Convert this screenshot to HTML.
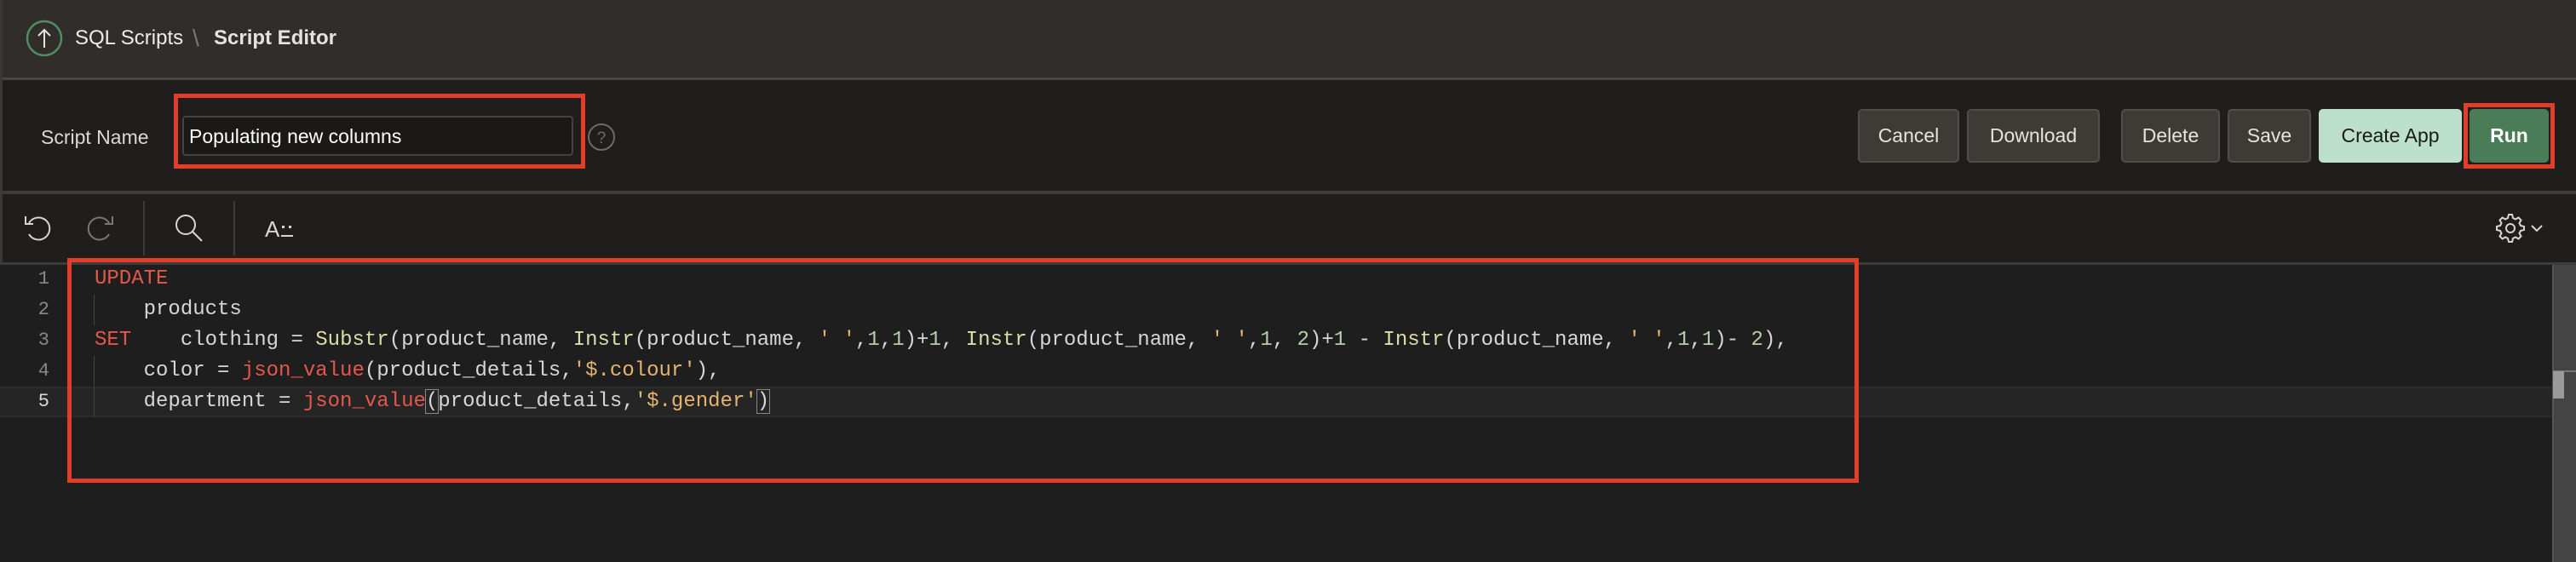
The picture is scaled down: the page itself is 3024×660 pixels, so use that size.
<!DOCTYPE html>
<html><head><meta charset="utf-8"><style>
*{margin:0;padding:0;box-sizing:border-box}
body{width:3024px;height:660px;background:#1f1e1d;position:relative;overflow:hidden;font-family:"Liberation Sans",sans-serif;color:#e6e2dc}
.a{position:absolute}
.hdr{left:0;top:0;width:3024px;height:94px;background:#312d2a;border-bottom:3px solid #4a4640}
.btn{position:absolute;top:128px;height:63px;background:#3e3a36;border:2px solid #524d48;border-radius:5px;color:#e6e2dc;font-size:23px;display:flex;align-items:center;justify-content:center}
.red{position:absolute;border:5px solid #e23d28}
.code{font-family:"Liberation Mono",monospace;font-size:24px;color:#d6d6d6;white-space:pre;line-height:36px}
.k{color:#e5574a}.f{color:#dcdcaa}.n{color:#b5cea8}.s{color:#e4b46e}
.ln{font-family:"Liberation Mono",monospace;font-size:22px;color:#8a8a8a;width:58px;text-align:right;line-height:36px}
</style></head><body>
<div class="a hdr"></div>
<div class="a" style="left:0;top:0;width:3px;height:660px;background:#3a3836"></div>
<svg class="a" style="left:30px;top:23px" width="44" height="44" viewBox="0 0 44 44"><circle cx="22" cy="22" r="20" fill="none" stroke="#4f8d62" stroke-width="2.5"/><path d="M22 33V12M15 19l7-7 7 7" fill="none" stroke="#e6e2dc" stroke-width="2"/></svg>
<div class="a" style="left:88px;top:31px;font-size:24px;color:#eeeae4">SQL Scripts</div>
<div class="a" style="left:226px;top:29px;font-size:28px;color:#7b7670">\</div>
<div class="a" style="left:251px;top:31px;font-size:24px;font-weight:bold;color:#e6e2dc">Script Editor</div>

<div class="a" style="left:48px;top:148px;font-size:23px;color:#dcd8d2">Script Name</div>
<div class="a" style="left:214px;top:136px;width:459px;height:47px;background:#1a1918;border:2px solid #46433f;border-radius:4px"></div>
<div class="a" style="left:222px;top:147px;font-size:23px;color:#fff">Populating new columns</div>
<div class="red" style="left:204px;top:110px;width:483px;height:88px"></div>
<svg class="a" style="left:689px;top:144px" width="34" height="34" viewBox="0 0 34 34"><circle cx="17" cy="17" r="15" fill="none" stroke="#6e6a65" stroke-width="2"/><text x="17" y="24" text-anchor="middle" font-family="Liberation Sans" font-size="19" fill="#6e6a65">?</text></svg>

<div class="btn" style="left:2181px;width:119px">Cancel</div>
<div class="btn" style="left:2309px;width:156px">Download</div>
<div class="btn" style="left:2490px;width:116px">Delete</div>
<div class="btn" style="left:2615px;width:98px">Save</div>
<div class="btn" style="left:2722px;width:168px;background:#bde0cc;border-color:#bde0cc;color:#1a1a1a">Create App</div>
<div class="btn" style="left:2899px;width:93px;background:#4a7d57;border-color:#4a7d57;color:#fff;font-weight:bold">Run</div>
<div class="red" style="left:2892px;top:121px;width:107px;height:77px"></div>

<div class="a" style="left:0;top:224px;width:3024px;height:4px;background:#403d39"></div>
<svg class="a" style="left:26px;top:250px" width="40" height="38" viewBox="0 0 40 38" fill="none" stroke="#d8d6d2" stroke-width="2"><path d="M8 12a13 13 0 1 1 0 13"/><path d="M4 4v9h9"/></svg>
<svg class="a" style="left:96px;top:250px" width="40" height="38" viewBox="0 0 40 38" fill="none" stroke="#7a7875" stroke-width="2"><path d="M32 12a13 13 0 1 0 0 13"/><path d="M36 4v9h-9"/></svg>
<div class="a" style="left:168px;top:236px;width:2px;height:64px;background:#3e3c3a"></div>
<svg class="a" style="left:204px;top:250px" width="38" height="38" viewBox="0 0 38 38" fill="none" stroke="#d8d6d2" stroke-width="2"><circle cx="14" cy="14" r="11"/><path d="M22 22l11 11"/></svg>
<div class="a" style="left:274px;top:236px;width:2px;height:64px;background:#3e3c3a"></div>
<div class="a" style="left:311px;top:254px;font-size:26px;color:#d8d6d2">A</div>
<svg class="a" style="left:329px;top:262px" width="18" height="20" viewBox="0 0 18 20" fill="#d8d6d2"><rect x="2" y="3" width="3" height="3"/><rect x="10" y="3" width="3" height="3"/><rect x="1" y="14" width="14" height="2"/></svg>
<svg class="a" style="left:2930px;top:250px" width="64" height="36" viewBox="0 0 64 36" fill="none" stroke="#d8d6d2" stroke-width="2"><path d="M15 2h4l1 4 3 1.5 3.5-2 3 3-2 3.5 1.5 3 4 1v4l-4 1-1.5 3 2 3.5-3 3-3.5-2-3 1.5-1 4h-4l-1-4-3-1.5-3.5 2-3-3 2-3.5-1.5-3-4-1v-4l4-1 1.5-3-2-3.5 3-3 3.5 2 3-1.5z"/><circle cx="17" cy="18" r="5"/><path d="M42 15l6 6 6-6"/></svg>

<div class="a" style="left:0;top:308px;width:3024px;height:3px;background:#3e3c39"></div>
<div class="a" style="left:0;top:311px;width:2996px;height:349px;background:#1e1e1e"></div>
<div class="a" style="left:0;top:454px;width:2996px;height:36px;background:#252525;border-top:2px solid #2b2b2b;border-bottom:2px solid #2b2b2b"></div>
<div class="a" style="left:2996px;top:311px;width:28px;height:349px;background:#444;border-left:2px solid #555"></div>
<div class="a" style="left:2997px;top:435px;width:27px;height:2px;background:#777"></div>
<div class="a" style="left:2997px;top:436px;width:13px;height:32px;background:#9a9a9a"></div>
<div class="a" style="left:110px;top:346px;width:1px;height:36px;background:#444"></div>
<div class="a" style="left:110px;top:418px;width:1px;height:72px;background:#444"></div>

<div class="a ln" style="left:0;top:310px">1<br>2<br>3<br>4<br><span style="color:#d8d8d8">5</span></div>
<div class="a code" style="left:111px;top:310px"><span class="k">UPDATE</span>
    products
<span class="k">SET</span>    clothing = <span class="f">Substr</span>(product_name, <span class="f">Instr</span>(product_name, <span class="s">' '</span>,<span class="n">1</span>,<span class="n">1</span>)+<span class="n">1</span>, <span class="f">Instr</span>(product_name, <span class="s">' '</span>,<span class="n">1</span>, <span class="n">2</span>)+<span class="n">1</span> - <span class="f">Instr</span>(product_name, <span class="s">' '</span>,<span class="n">1</span>,<span class="n">1</span>)- <span class="n">2</span>),
    color = <span class="k">json_value</span>(product_details,<span class="s">'$.colour'</span>),
    department = <span class="k">json_value</span><span style="outline:1px solid #888">(</span>product_details,<span class="s">'$.gender'</span><span style="outline:1px solid #888">)</span></div>
<div class="red" style="left:79px;top:303px;width:2103px;height:264px"></div>
</body></html>
